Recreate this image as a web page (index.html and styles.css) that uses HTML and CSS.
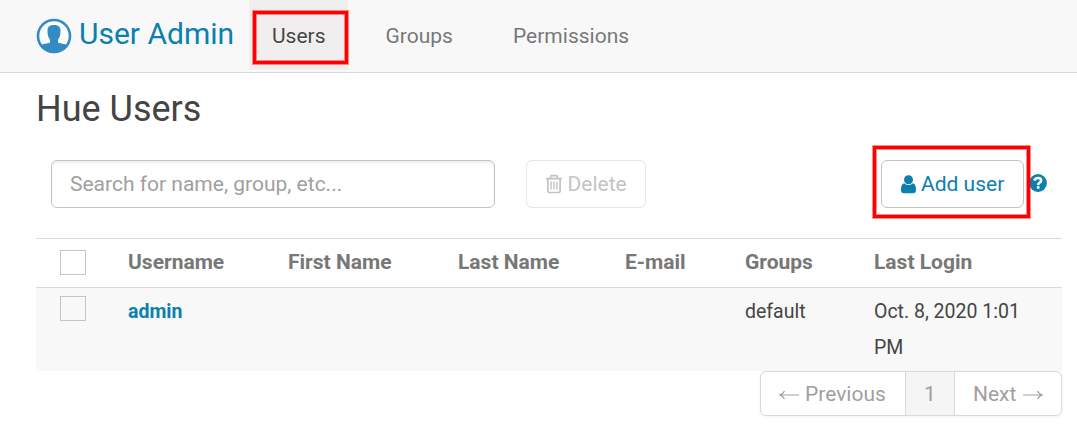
FILE: index.html
```html
<!DOCTYPE html>
<html lang="en">
<head>
<meta charset="utf-8">
<title>Hue - User Admin</title>
<link rel="stylesheet" href="styles.css">
</head>
<body>
<header class="navbar">
  <a class="brand">
    <svg class="brand-icon" viewBox="0 0 36 36"><circle cx="18" cy="18" r="16" fill="#fbfdfe" stroke="#338bc6" stroke-width="2.6"/><path d="M14 24.500V21.800C12.300 19.500 11.300 16.500 11.500 12.500C11.600 8.500 14 7 18 7S24.400 8.500 24.500 12.500C24.700 16.500 23.700 19.500 22 21.800V24.500C24.500 26 29 25.500 32.200 27.500A17 17 0 0 1 3.800 27.500C7 25.500 11.500 26 14 24.500Z" fill="#338bc6"/></svg>
    <span class="brand-name">User Admin</span>
  </a>
  <nav class="tabs">
    <a class="tab active"><span>Users</span><span class="mark mark-tab"></span></a>
    <a class="tab tab-groups"><span>Groups</span></a>
    <a class="tab tab-perms"><span>Permissions</span></a>
  </nav>
</header>
<main class="content">
  <h1 class="title">Hue Users</h1>
  <div class="toolbar">
    <div class="search"><span>Search for name, group, etc...</span></div>
    <button class="btn btn-delete" disabled>
      <svg class="trash" viewBox="0 0 18 20" fill="none" stroke="#c4c4c4"><path d="M1 4.600H17M5.600 4.400V2.500Q5.600 1.600 6.500 1.600H11.500Q12.400 1.600 12.400 2.500V4.400" stroke-width="1.600"/><path d="M2.900 5V17.200Q2.900 18.500 4.200 18.500H13.800Q15.100 18.500 15.100 17.200V5" stroke-width="1.700"/><path d="M6.100 7.500V15.500M9 7.500V15.500M11.900 7.500V15.500" stroke-width="1.400"/></svg>
      <span>Delete</span>
    </button>
    <div class="add-group">
      <button class="btn btn-add">
        <svg class="user" viewBox="0 0 15 19" fill="#0b7fad"><circle cx="7.500" cy="4.800" r="4.500"/><path d="M3.200 8.200Q7.500 12 11.800 8.200C14.300 8.800 15 11.500 15 15Q15 18.300 12 18.300H3Q0 18.300 0 15C0 11.500 .7 8.800 3.200 8.200Z"/></svg>
        <span>Add user</span>
      </button>
      <span class="mark mark-add"></span>
      <svg class="help" viewBox="0 0 18 18"><circle cx="9" cy="9" r="8.900" fill="#0b7fad"/><path d="M5.200 6.600Q6.300 4 9 4Q12.100 4 12.100 6.500Q12.100 7.900 10.600 8.700Q9.200 9.400 9.200 11" fill="none" stroke="#fff" stroke-width="2.600"/><rect x="7.900" y="12.100" width="2.600" height="2.600" fill="#fff"/></svg>
    </div>
  </div>
  <div class="table">
    <div class="row head">
      <span class="check"></span><span>Username</span><span>First Name</span><span>Last Name</span><span>E-mail</span><span>Groups</span><span>Last Login</span>
    </div>
    <div class="row body">
      <span class="check"></span><a class="user-link">admin</a><span></span><span></span><span></span><span>default</span><span>Oct. 8, 2020 1:01<br>PM</span>
    </div>
  </div>
  <div class="pager">
    <a class="page prev"><svg class="arrow" viewBox="0 0 20 12"><path d="M20 6H1M5.500 2Q4 5 .8 6Q4 7 5.500 10"/></svg><span>Previous</span></a>
    <a class="page current">1</a>
    <a class="page next"><span>Next</span><svg class="arrow" viewBox="0 0 20 12"><path d="M0 6H19M14.500 2Q16 5 19.200 6Q16 7 14.500 10"/></svg></a>
  </div>
</main>
</body>
</html>
```
FILE: styles.css
```css
* { box-sizing: border-box; }
body { margin: 0; background: #fff; color: #444; font: 19.5px/36px Roboto, sans-serif; height: 439px; overflow: hidden; }
.navbar { display: flex; height: 73px; padding-left: 36px; background: #f8f8f8; border-bottom: 1px solid #d9d9d9; }
.brand { display: flex; width: 213px; padding-top: 17px; color: #0b7fad; font-size: 30px; white-space: nowrap; }
.brand-icon { width: 36px; height: 36px; margin: 1px 7px 0 0; flex: none; }
.brand-name { line-height: 34px; }
.tabs { display: flex; height: 70px; }
.tab { padding-top: 18px; color: #777; font-size: 21px; text-shadow: 0 1px 0 #fff; white-space: nowrap; }
.active { position: relative; width: 99px; padding-left: 23px; background: #f0eeef; color: #444; }
.tab-groups { width: 127px; padding-left: 37.500px; }
.tab-perms { padding-left: 38px; }
.mark { position: absolute; border: 3px solid #f00; box-shadow: 0 0 0 1px rgba(255,0,0,.45), inset 0 0 0 1px rgba(255,0,0,.45); }
.mark-tab { left: 4px; top: 11px; width: 95px; height: 53px; }
.mark-add { left: -8px; top: -14px; width: 157px; height: 72px; }
.content { padding: 16px 15px 0 36px; }
.title { height: 40px; margin: 0; font-size: 36px; font-weight: 400; line-height: 40px; }
.toolbar { display: flex; margin-top: 31px; padding-left: 15px; height: 48px; }
.search { width: 444px; height: 48px; padding: 5px 18px; border: 1px solid #c4c4c4; border-radius: 6px; color: #9f9f9f; font-size: 21px; box-shadow: inset 0 2px 2px rgba(0,0,0,.06); white-space: nowrap; }
.btn { display: flex; align-items: center; height: 48px; padding: 0 18px; border: 1px solid #c4c4c4; border-radius: 6px; background: #fff; font: 21px/36px Roboto, sans-serif; white-space: nowrap; }
.btn-delete { width: 120px; margin-left: 31px; color: #c4c4c4; border-color: #e6e6e6; }
.trash { width: 18px; height: 20px; margin: 0 4.500px 1px 0; flex: none; }
.add-group { position: relative; display: flex; width: 181px; margin-left: auto; }
.btn-add { width: 143px; padding-left: 19px; color: #0b7fad; }
.user { width: 15px; height: 19px; margin-right: 5px; flex: none; }
.help { width: 18px; height: 18px; margin: 13.500px 0 0 5.300px; }
.table { margin-top: 30px; }
.row { display: grid; grid-template-columns: 92px 160px 170px 167px 120px 129px 188px; border-top: 1px solid #d9d9d9; white-space: nowrap; }
.head { height: 49px; padding-top: 5px; color: #777; font-size: 21px; font-weight: 700; }
.body { height: 84px; padding-top: 6px; background: #f8f8f8; }
.check { width: 26px; height: 25px; margin: 6px 0 0 24px; border: 1px solid #c4c4c4; }
.body .check { margin-top: 2px; }
.user-link { color: #0b7fad; font-weight: 700; }
.pager { display: flex; width: 302px; height: 45px; margin-left: auto; border: 1px solid #d9d9d9; border-radius: 6px; box-shadow: 0 1px 3px rgba(0,0,0,.06); color: #9f9f9f; font-size: 21px; overflow: hidden; }
.page { display: flex; align-items: center; white-space: nowrap; }
.prev { width: 144px; padding-left: 18px; gap: 6px; }
.current { width: 50px; justify-content: center; border: solid #d9d9d9; border-width: 0 1px; background: #f5f5f5; }
.next { padding-left: 18px; gap: 7px; }
.arrow { width: 20px; height: 12px; margin-top: 2px; fill: none; stroke: #9f9f9f; stroke-width: 1.2; }
```
